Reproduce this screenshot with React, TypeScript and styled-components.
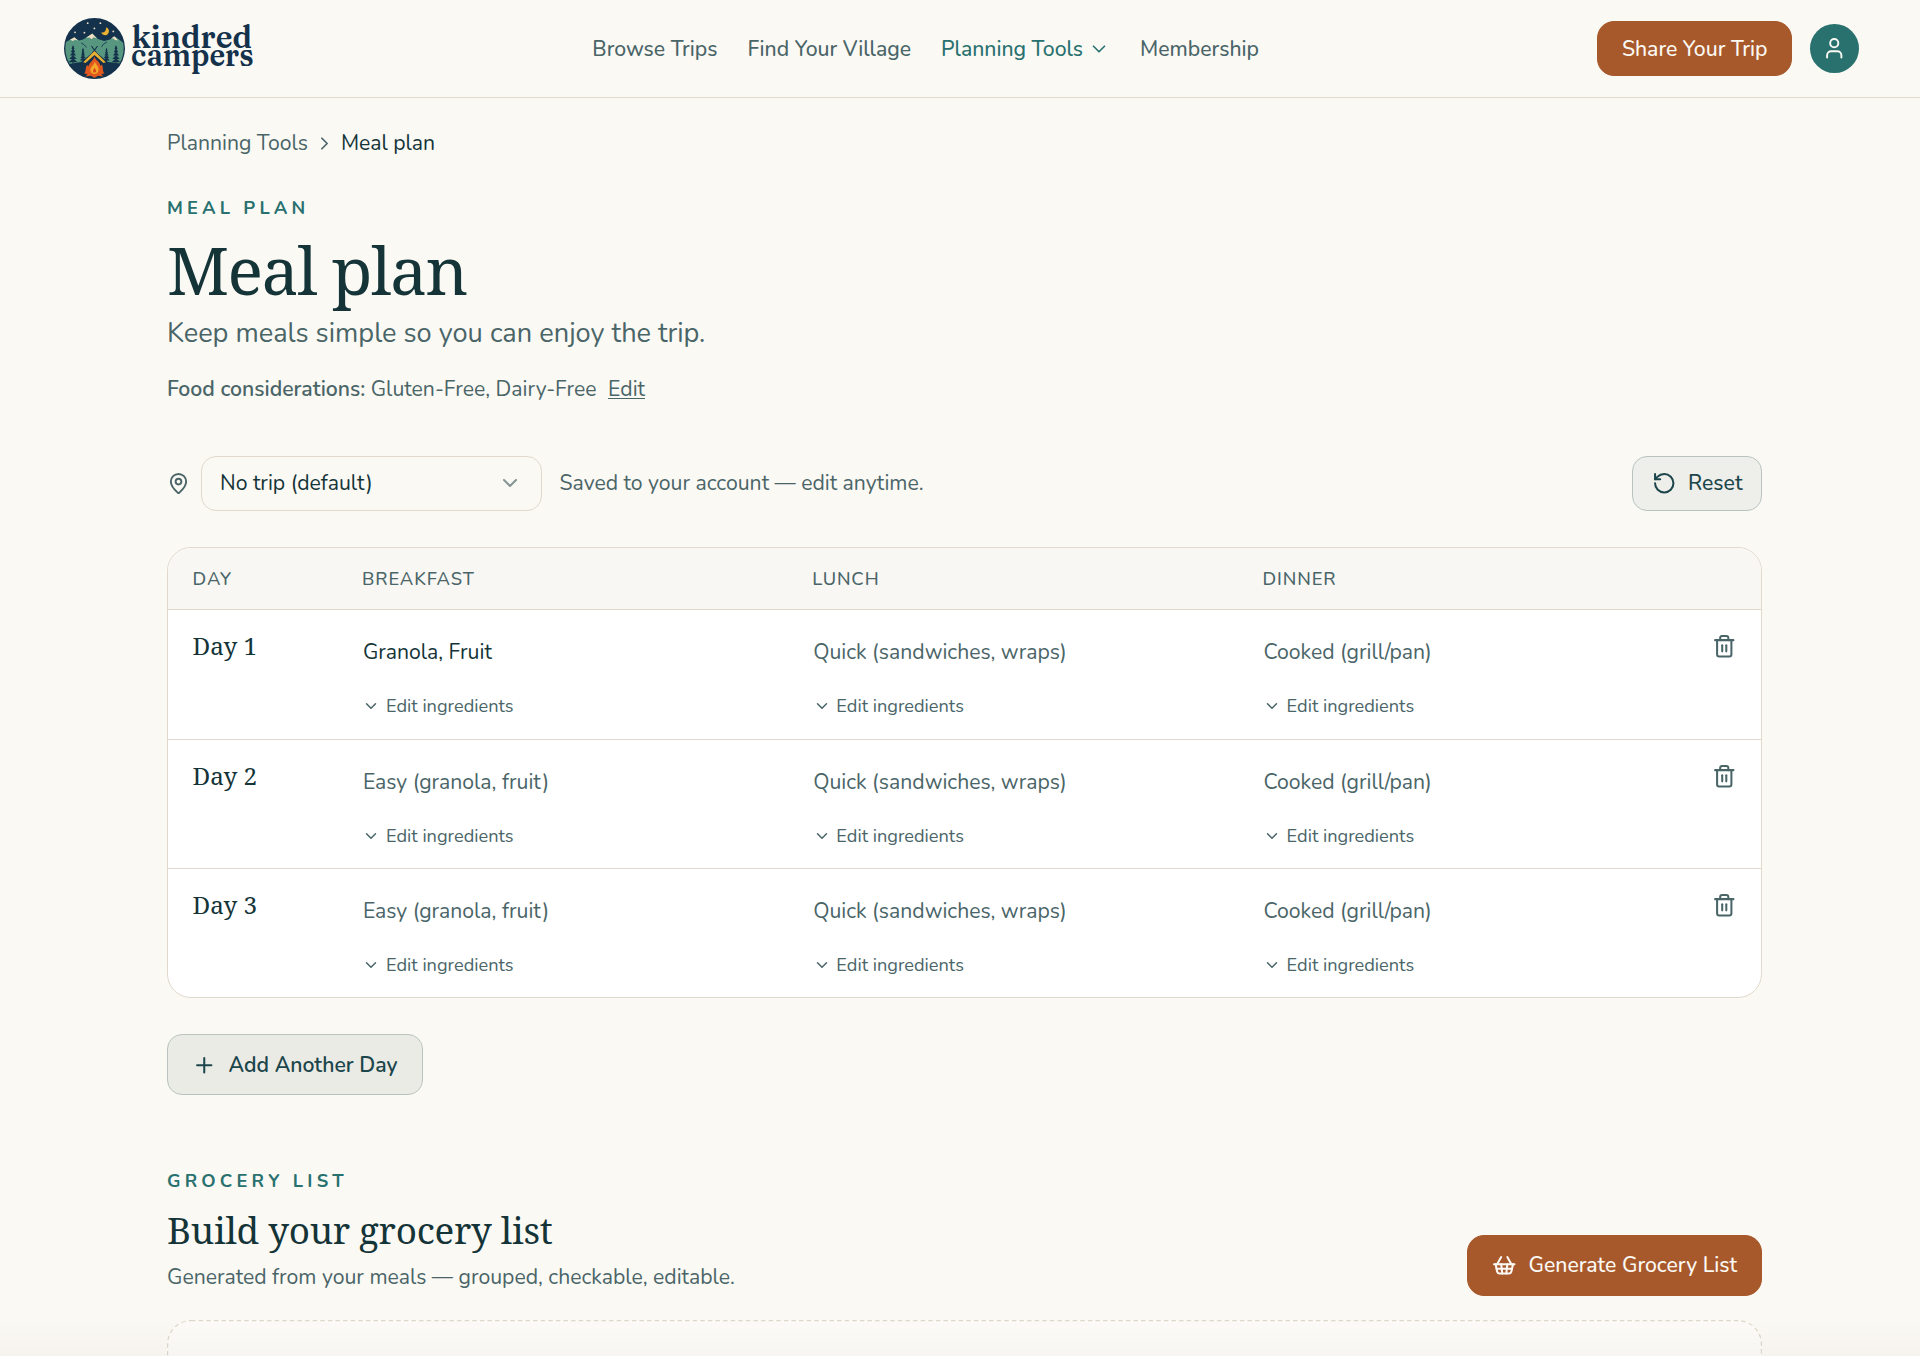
import React from 'react';
import styled, { createGlobalStyle } from 'styled-components';
import {
  ChevronDown,
  ChevronRight,
  MapPin,
  Plus,
  RotateCcw,
  ShoppingBasket,
  Trash2,
  User,
} from 'lucide-react';

const color = {
  page: '#fbf9f4',
  head: '#f9f7f3',
  ink: '#143438',
  deep: '#1c464b',
  muted: '#4a6568',
  teal: '#28716f',
  rust: '#a8592c',
  line: '#e0d9cc',
  navy: '#14324b',
};

const sans = 'Nunito, "Noto Sans", sans-serif';
const serif = '"Noto Serif", "DejaVu Serif", serif';

const GlobalStyle = createGlobalStyle`
  * { box-sizing: border-box; }
  body {
    margin: 0;
    background: ${color.page};
    color: ${color.ink};
    font: 400 21.2px/32px ${sans};
    -webkit-font-smoothing: antialiased;
  }
  h1, h2, p { margin: 0; font-weight: 400; }
  button { font: inherit; color: inherit; cursor: pointer; }
`;

const Page = styled.div`
  height: 1356px;
  overflow: hidden;
`;

const Header = styled.header`
  height: 98px;
  padding: 0 61px 0 64px;
  border-bottom: 1px solid ${color.line};
  display: flex;
  align-items: center;
  justify-content: space-between;
`;

const Logo = styled.a`
  display: flex;
  svg { display: block; overflow: visible; }
`;

const BrandText = styled.g`
  fill: ${color.navy};
  font-family: Fraunces, "Noto Serif", serif;
  font-size: 32px;
  font-weight: 600;
  font-variation-settings: 'opsz' 9, 'SOFT' 100;
`;

const Nav = styled.nav`
  display: flex;
  gap: 30px;
`;

const NavLink = styled.a<{ $active?: boolean }>`
  display: flex;
  align-items: center;
  gap: 5px;
  font-weight: 500;
  white-space: nowrap;
  color: ${(p) => (p.$active ? color.teal : color.muted)};
`;

const HeaderActions = styled.div`
  display: flex;
  align-items: center;
  gap: 18px;
`;

const Button = styled.button<{ $kind: 'primary' | 'soft' | 'outline'; $size: 'md' | 'lg' }>`
  display: flex;
  align-items: center;
  gap: 12px;
  height: ${(p) => (p.$size === 'lg' ? 61 : 54.5)}px;
  padding: 0 ${(p) => (p.$kind === 'outline' ? 18.5 : p.$size === 'lg' ? 24 : 23.6)}px;
  border-radius: ${(p) => (p.$kind === 'primary' ? 17 : 15)}px;
  border: 1px solid ${(p) => (p.$kind === 'primary' ? color.rust : '#b9c4c1')};
  background: ${(p) =>
    p.$kind === 'primary' ? color.rust : p.$kind === 'soft' ? '#ebebe5' : '#eeeeea'};
  color: ${(p) => (p.$kind === 'primary' ? color.page : color.deep)};
  font-weight: ${(p) => (p.$kind === 'soft' ? 600 : 500)};
  white-space: nowrap;
`;

const Avatar = styled.button`
  width: 49px;
  height: 49px;
  padding: 0;
  border: 0;
  border-radius: 50%;
  display: grid;
  place-items: center;
  background: ${color.teal};
  color: ${color.page};
`;

const Main = styled.main`
  width: 1595px;
  margin-left: 167px;
  padding-top: 29px;
`;

const Breadcrumb = styled.nav`
  display: flex;
  align-items: center;
  gap: 6px;
  color: ${color.muted};
`;

const Current = styled.span`
  color: ${color.ink};
`;

const Eyebrow = styled.p`
  font-size: 18.3px;
  line-height: 26px;
  font-weight: 700;
  letter-spacing: 4.2px;
  color: ${color.teal};
`;

const Intro = styled.section`
  padding-top: 36px;
`;

const Title = styled.h1`
  margin-top: 12px;
  font: 400 66.3px/72px ${serif};
  letter-spacing: -0.024em;
`;

const Lead = styled.p`
  margin-top: 10.5px;
  font-size: 27.2px;
  line-height: 36px;
  color: ${color.muted};
`;

const Considerations = styled.p`
  margin-top: 21.5px;
  color: ${color.muted};
  strong { font-weight: 600; }
  a {
    margin-left: 11.5px;
    text-decoration: underline;
    text-underline-offset: 2px;
    text-decoration-thickness: 1px;
  }
`;

const Toolbar = styled.div`
  margin-top: 51px;
  display: flex;
  align-items: center;
  justify-content: space-between;
  color: ${color.muted};
`;

const TripPicker = styled.div`
  display: flex;
  align-items: center;
`;

const Select = styled.button`
  width: 340.5px;
  height: 54.5px;
  margin: 0 18px 0 11px;
  padding: 0 19px 0 18px;
  display: flex;
  align-items: center;
  justify-content: space-between;
  border: 1px solid ${color.line};
  border-radius: 15px;
  background: transparent;
  color: ${color.ink};
  svg { color: ${color.ink}; opacity: 0.5; }
`;

const Table = styled.div`
  margin-top: 36.5px;
  border: 1px solid ${color.line};
  border-radius: 24px;
  background: #fff;
  overflow: hidden;
`;

const columns = '169.3px 450.3px 450.3px 1fr auto';

const TableHead = styled.div`
  display: grid;
  grid-template-columns: ${columns};
  align-items: center;
  height: 62px;
  padding: 0 25px 0 24.6px;
  background: ${color.head};
  border-bottom: 1px solid ${color.line};
  font-size: 18.3px;
  font-weight: 500;
  letter-spacing: 0.05em;
  color: ${color.muted};
`;

const Row = styled.div`
  display: grid;
  grid-template-columns: ${columns};
  height: 129.1px;
  padding: 20px 25px 0 24.6px;
  & + & { border-top: 1px solid ${color.line}; }
`;

const DayName = styled.div`
  font: 400 24.3px/32px ${serif};
`;

const Meal = styled.div`
  padding: 6px 0 0 1px;
`;

const MealText = styled.p<{ $filled?: boolean }>`
  color: ${(p) => (p.$filled ? color.ink : color.muted)};
`;

const EditIngredients = styled.button`
  display: flex;
  align-items: center;
  gap: 5.7px;
  margin: 22px 0 0 -0.6px;
  padding: 0;
  border: 0;
  background: none;
  font-size: 18.2px;
  color: ${color.muted};
`;

const DeleteDay = styled.button`
  width: 24.5px;
  height: 32px;
  padding: 0;
  border: 0;
  background: none;
  color: ${color.muted};
  display: grid;
  place-items: center;
`;

const AddRow = styled.div`
  display: flex;
  padding-top: 36px;
`;

const Grocery = styled.section`
  padding-top: 72.7px;
`;

const GroceryHeader = styled.div`
  display: flex;
  justify-content: space-between;
  align-items: flex-end;
`;

const GroceryText = styled.div`
  padding-bottom: 3px;
  p:last-child { color: ${color.muted}; }
`;

const GroceryTitle = styled.h2`
  margin: 12px 0 7px;
  font: 400 36.8px/48px ${serif};
  letter-spacing: -0.27px;
`;

const EmptyList = styled.div`
  height: 200px;
  margin-top: 24px;
  border-radius: 24px;
  background: rgba(255, 255, 255, 0.35);
  svg { display: block; }
`;

const BottomFade = styled.div`
  position: fixed;
  left: 0;
  right: 0;
  bottom: 0;
  height: 40px;
  pointer-events: none;
  background: linear-gradient(to bottom, rgba(90, 80, 60, 0), rgba(90, 80, 60, 0.03));
`;

const Pine = ({ x, top, base, w }: { x: number; top: number; base: number; w: number }) => {
  const step = (base - top) / 5;
  return (
    <g fill={color.navy}>
      {[0, 1, 2, 3, 4].map((i) => {
        const half = (w * (i + 2)) / 12;
        const y = top + i * step;
        return <path key={i} d={`M${x} ${y - 1.5}L${x + half} ${y + step * 0.75}H${x - half}Z`} />;
      })}
      <rect x={x - 0.5} y={top} width={1} height={base - top + 3} />
    </g>
  );
};

const BrandMark = () => (
  <svg width="190" height="62" viewBox="0 0 190 62" role="img" aria-label="kindred campers">
    <defs>
      <clipPath id="badge">
        <circle cx="30.5" cy="30.5" r="29.2" />
      </clipPath>
    </defs>
    <circle cx="30.5" cy="30.5" r="30.5" fill={color.navy} />
    <g clipPath="url(#badge)">
      <path
        d="M0 25L10 19.5L15 22.5L19 21.5L28.3 15.8L34 21L40 23L46 21.5L51 18.5L61 26V46L44 44L30.5 33L17 44L0 47Z"
        fill="#57967f"
      />
      <path d="M6 21.8L10.5 19.2L14 22.4L11 21.8L9 23Z" fill="#f0dfc4" />
      <path d="M22 19.8L28.3 15.6L33 20.5L29.5 19.3L27.5 21.2L25.5 19.6Z" fill="#f0dfc4" />
      <path d="M47 20.5L50.3 18.3L54.2 22.6L51 22L49.5 20.6Z" fill="#f0dfc4" />
      <path d="M17 25l3 1.5 2.5 3M43 24l-3.5 2-2 3" stroke={color.navy} strokeWidth=".8" fill="none" />
      <Pine x={9} top={28.5} base={45} w={9} />
      <Pine x={19} top={31} base={43} w={6.5} />
      <Pine x={42.5} top={31} base={43} w={6.5} />
      <Pine x={52} top={28.5} base={45} w={9} />
      <path d="M0 48L18 45.5L30.5 33L43 45.5L61 48V61H0Z" fill={color.navy} />
      <path d="M27.5 28L32.5 35M33.5 28L28.5 35" stroke={color.navy} strokeWidth="1.1" />
      <path d="M30.5 33L41.8 44.2L39.5 45L30.5 37L21.5 45L19.2 44.2Z" fill="#eab033" />
    </g>
    <path
      d="M30.3 38.5C31.5 42.5 36 43.5 36.5 48L38 46.5C39.5 51 38.5 54 40.5 55.5L37.5 56L39 58.5L34 57.8L30.5 60L27 57.8L21.5 58.5L23.5 56L20 55.5C22.5 53.5 21 50 23 47L24.5 48.5C25 44.5 29.5 43 30.3 38.5Z"
      fill="#e2591f"
    />
    <path
      d="M30.8 43.5C31.5 46.5 35 48 34.6 52C34.3 54.6 32.6 56 30.5 56C28.2 56 26.4 54.4 26.4 52C26.4 48.5 30.3 47.2 30.8 43.5Z"
      fill="#f4a62a"
    />
    <path d="M30.7 49.5C31 51.2 32.3 51.7 32.1 53.2C31.6 55 29.4 55 29 53.3C28.9 51.8 30.4 51.2 30.7 49.5Z" fill="#d9481c" />
    <g fill="#f0dfc4">
      <circle cx="23.7" cy="5.2" r=".9" />
      <circle cx="36.4" cy="5.2" r=".9" />
      <circle cx="11" cy="14.3" r=".9" />
      <circle cx="20.4" cy="14.7" r=".9" />
      <circle cx="30.4" cy="10.4" r=".9" />
      <circle cx="49.3" cy="13.4" r=".9" />
    </g>
    <path d="M42 9.3A4 4 0 1 1 37.2 14.4A4 4 0 0 0 42 9.3Z" fill="#eab033" />
    <BrandText>
      <text x="67.5" y="29.6" textLength="120.5" lengthAdjust="spacingAndGlyphs">kindred</text>
      <text x="67" y="48.4" textLength="122.5" lengthAdjust="spacingAndGlyphs">campers</text>
    </BrandText>
  </svg>
);

const DashedOutline = () => (
  <svg width="1595" height="200" viewBox="0 0 1595 200" fill="none" aria-hidden="true">
    <rect
      x="0.6"
      y="0.6"
      width="1593.8"
      height="198.8"
      rx="23.5"
      stroke="#ddd8ca"
      strokeWidth="1.2"
      strokeDasharray="4.4 3.2"
    />
  </svg>
);

type Day = { name: string; breakfast: string; filled?: boolean };

const days: Day[] = [
  { name: 'Day 1', breakfast: 'Granola, Fruit', filled: true },
  { name: 'Day 2', breakfast: 'Easy (granola, fruit)' },
  { name: 'Day 3', breakfast: 'Easy (granola, fruit)' },
];

const MealCell = ({ text, filled }: { text: string; filled?: boolean }) => (
  <Meal>
    <MealText $filled={filled}>{text}</MealText>
    <EditIngredients>
      <ChevronDown size={18} strokeWidth={2} />
      Edit ingredients
    </EditIngredients>
  </Meal>
);

export default function App() {
  return (
    <Page>
      <GlobalStyle />
      <Header>
        <Logo>
          <BrandMark />
        </Logo>
        <Nav>
          <NavLink>Browse Trips</NavLink>
          <NavLink>Find Your Village</NavLink>
          <NavLink $active>
            Planning Tools
            <ChevronDown size={22} strokeWidth={1.8} />
          </NavLink>
          <NavLink>Membership</NavLink>
        </Nav>
        <HeaderActions>
          <Button $kind="primary" $size="md">Share Your Trip</Button>
          <Avatar aria-label="Account">
            <User size={24.5} strokeWidth={1.9} />
          </Avatar>
        </HeaderActions>
      </Header>

      <Main>
        <Breadcrumb>
          <span>Planning Tools</span>
          <ChevronRight size={21} strokeWidth={2} />
          <Current>Meal plan</Current>
        </Breadcrumb>

        <Intro>
          <Eyebrow>MEAL PLAN</Eyebrow>
          <Title>Meal plan</Title>
          <Lead>Keep meals simple so you can enjoy the trip.</Lead>
          <Considerations>
            <strong>Food considerations:</strong> Gluten-Free, Dairy-Free
            <a>Edit</a>
          </Considerations>
        </Intro>

        <Toolbar>
          <TripPicker>
            <MapPin size={23} strokeWidth={2} />
            <Select>
              No trip (default)
              <ChevronDown size={24} strokeWidth={2} />
            </Select>
            <span>Saved to your account — edit anytime.</span>
          </TripPicker>
          <Button $kind="outline" $size="md">
            <RotateCcw size={24.5} strokeWidth={2} />
            Reset
          </Button>
        </Toolbar>

        <Table>
          <TableHead>
            <span>DAY</span>
            <span>BREAKFAST</span>
            <span>LUNCH</span>
            <span>DINNER</span>
          </TableHead>
          {days.map((day) => (
            <Row key={day.name}>
              <DayName>{day.name}</DayName>
              <MealCell text={day.breakfast} filled={day.filled} />
              <MealCell text="Quick (sandwiches, wraps)" />
              <MealCell text="Cooked (grill/pan)" />
              <DeleteDay aria-label="Remove day">
                <Trash2 size={24.5} strokeWidth={2} />
              </DeleteDay>
            </Row>
          ))}
        </Table>

        <AddRow>
          <Button $kind="soft" $size="lg">
            <Plus size={24.5} strokeWidth={2} />
            Add Another Day
          </Button>
        </AddRow>

        <Grocery>
          <Eyebrow>GROCERY LIST</Eyebrow>
          <GroceryHeader>
            <GroceryText>
              <GroceryTitle>Build your grocery list</GroceryTitle>
              <p>Generated from your meals — grouped, checkable, editable.</p>
            </GroceryText>
            <Button $kind="primary" $size="lg">
              <ShoppingBasket size={24.5} strokeWidth={2} />
              Generate Grocery List
            </Button>
          </GroceryHeader>
          <EmptyList>
            <DashedOutline />
          </EmptyList>
        </Grocery>
      </Main>
      <BottomFade />
    </Page>
  );
}
